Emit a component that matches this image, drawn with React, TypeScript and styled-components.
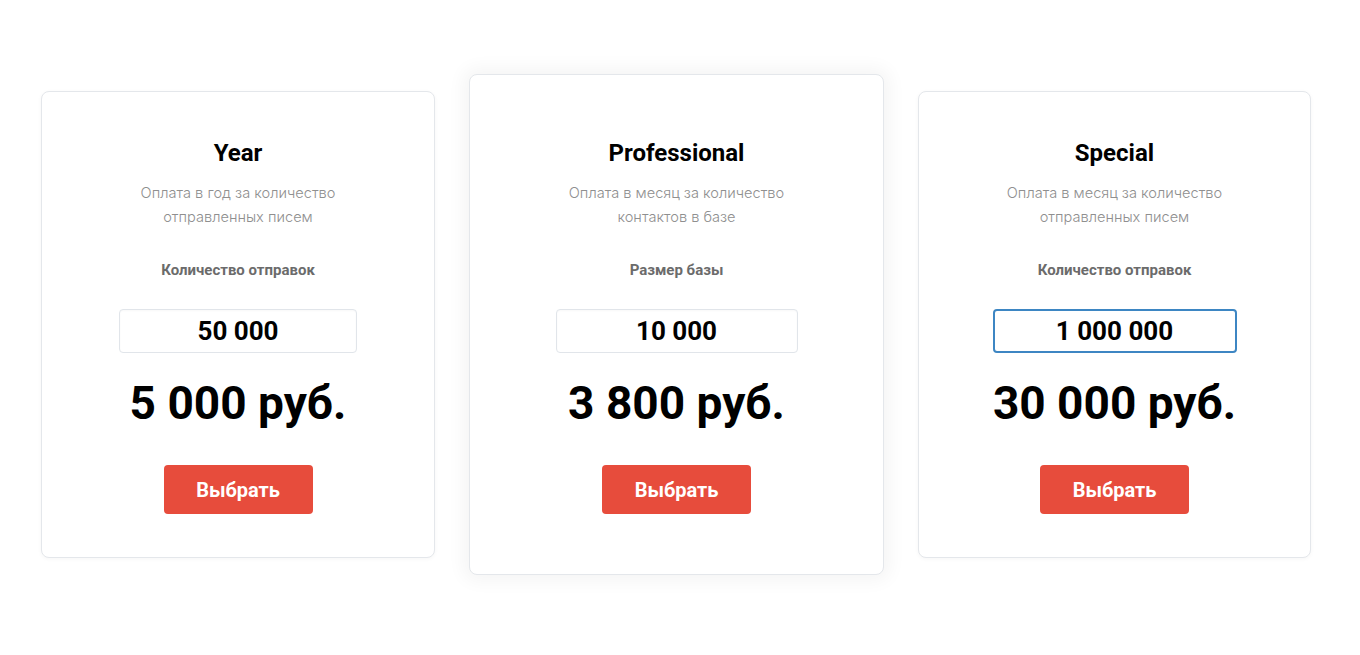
import { useEffect, useRef, useState } from "react";
import styled, { createGlobalStyle } from "styled-components";

const GlobalStyle = createGlobalStyle`
  body {
    margin: 0;
    background: #fff;
    font-family: "Roboto", "Liberation Sans", sans-serif;
  }
`;

const Page = styled.div`
  width: 1360px;
  height: 655px;
  display: flex;
  align-items: center;
  padding: 0 0 6px 41px;
  box-sizing: border-box;
  gap: 34px;
`;

const Card = styled.div<{ $featured?: boolean; $width: number }>`
  width: ${(p) => p.$width}px;
  box-sizing: border-box;
  display: flex;
  flex-direction: column;
  align-items: center;
  background: #fff;
  border: 1px solid #e4e7eb;
  border-radius: 8px;
  padding: ${(p) => (p.$featured ? "63px 0 60px" : "46px 0 43px")};
  box-shadow: ${(p) =>
    p.$featured
      ? "0 0 18px 6px rgba(0, 0, 0, 0.045)"
      : "0 1px 4px rgba(0, 0, 0, 0.04)"};
`;

const Title = styled.h2`
  margin: 0;
  font-size: 24px;
  line-height: 30px;
  font-weight: 700;
  color: #000;
`;

const Description = styled.p`
  margin: 13px 0 0;
  width: 250px;
  text-align: center;
  font-family: "Inter", "Roboto", sans-serif;
  font-size: 14.6px;
  line-height: 24px;
  font-weight: 300;
  color: #8f8f8f;
`;

const Label = styled.div`
  margin-top: 31px;
  font-size: 15px;
  line-height: 20px;
  font-weight: 700;
  color: #6b6b6b;
`;

const Amount = styled.input<{ $width: number }>`
  margin-top: 29px;
  width: ${(p) => p.$width}px;
  height: 44px;
  box-sizing: border-box;
  border: 1px solid #e1e5ea;
  border-radius: 4px;
  box-shadow: inset 0 1px 2px rgba(0, 0, 0, 0.03);
  text-align: center;
  font-family: "Roboto", "Liberation Sans", sans-serif;
  font-size: 26px;
  font-weight: 700;
  color: #000;
  outline: none;
  background: #fff;
  caret-color: #000;

  &:focus {
    border: 2px solid #3d86c3;
    box-shadow: none;
  }
`;

const Price = styled.div`
  margin-top: 26px;
  font-size: 46px;
  line-height: 48px;
  font-weight: 700;
  color: #000;
`;

const SelectButton = styled.button`
  margin-top: 38px;
  width: 149px;
  height: 49px;
  border: none;
  border-radius: 4px;
  background: #e74c3c;
  color: #fff;
  font-family: "Roboto", "Liberation Sans", sans-serif;
  font-size: 20px;
  font-weight: 700;
  cursor: pointer;
`;

interface Plan {
  title: string;
  description: string;
  label: string;
  amount: string;
  price: string;
  width: number;
  inputWidth: number;
  featured?: boolean;
  focused?: boolean;
}

const plans: Plan[] = [
  {
    title: "Year",
    description: "Оплата в год за количество отправленных писем",
    label: "Количество отправок",
    amount: "50 000",
    price: "5 000 руб.",
    width: 394,
    inputWidth: 238,
  },
  {
    title: "Professional",
    description: "Оплата в месяц за количество контактов в базе",
    label: "Размер базы",
    amount: "10 000",
    price: "3 800 руб.",
    width: 415,
    inputWidth: 242,
    featured: true,
  },
  {
    title: "Special",
    description: "Оплата в месяц за количество отправленных писем",
    label: "Количество отправок",
    amount: "1 000 000",
    price: "30 000 руб.",
    width: 393,
    inputWidth: 244,
    focused: true,
  },
];

const PlanCard = ({ plan }: { plan: Plan }) => {
  const [value, setValue] = useState(plan.amount);
  const ref = useRef<HTMLInputElement>(null);

  useEffect(() => {
    if (plan.focused && ref.current) {
      ref.current.focus();
      const len = ref.current.value.length;
      ref.current.setSelectionRange(len, len);
    }
  }, [plan.focused]);

  return (
    <Card $featured={plan.featured} $width={plan.width}>
      <Title>{plan.title}</Title>
      <Description>{plan.description}</Description>
      <Label>{plan.label}</Label>
      <Amount
        ref={ref}
        $width={plan.inputWidth}
        value={value}
        onChange={(e) => setValue(e.target.value)}
      />
      <Price>{plan.price}</Price>
      <SelectButton>Выбрать</SelectButton>
    </Card>
  );
};

const App = () => (
  <>
    <GlobalStyle />
    <Page>
      {plans.map((plan) => (
        <PlanCard key={plan.title} plan={plan} />
      ))}
    </Page>
  </>
);

export default App;
